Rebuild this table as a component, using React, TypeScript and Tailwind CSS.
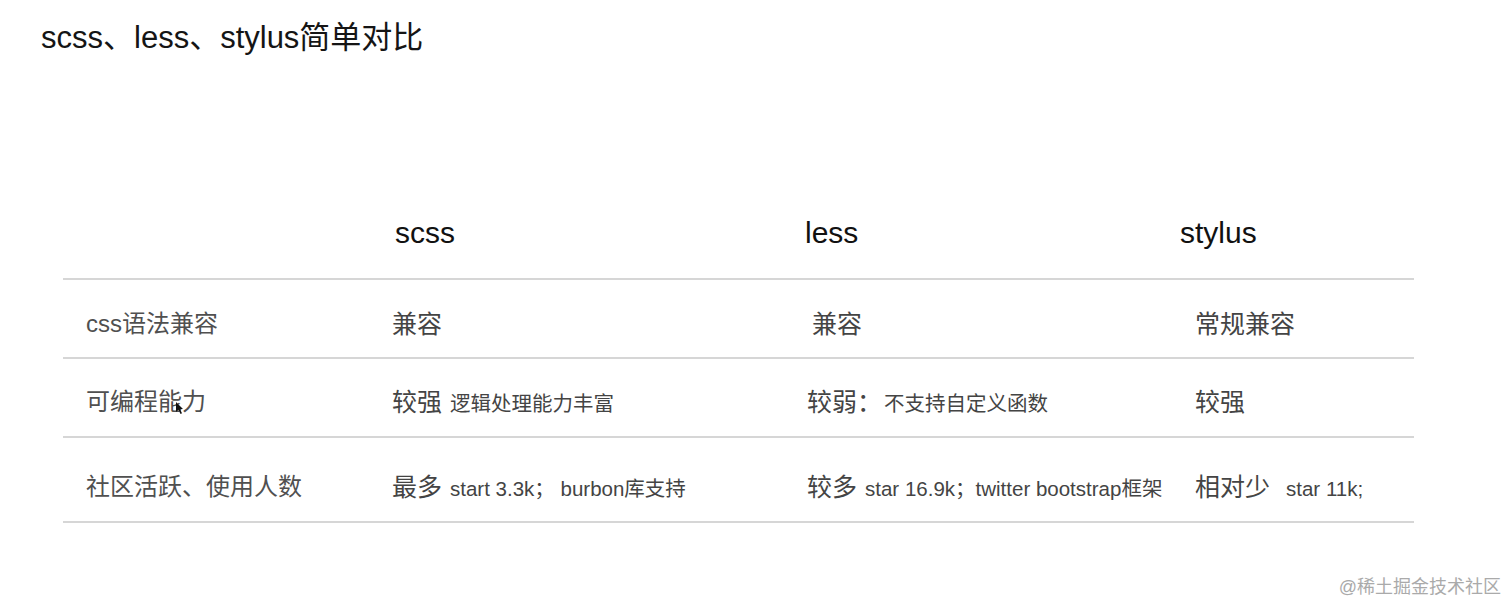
const FONT = {
  fontFamily: '"Liberation Sans", "Noto Sans CJK SC", sans-serif',
}

type Row = {
  label: string
  cells: { main: string; sub?: string; subGap?: string; pad?: string }[]
  pt: string
  h: string
}

const rows: Row[] = [
  {
    label: "css语法兼容",
    pt: "pt-[32px]",
    h: "h-[79px]",
    cells: [
      { main: "兼容" },
      { main: "兼容", pad: "pl-[5px]" },
      { main: "常规兼容" },
    ],
  },
  {
    label: "可编程能力",
    pt: "pt-[31px]",
    h: "h-[79px]",
    cells: [
      { main: "较强", sub: "逻辑处理能力丰富", subGap: "ml-2" },
      { main: "较弱：", sub: "不支持自定义函数", subGap: "ml-0.5" },
      { main: "较强" },
    ],
  },
  {
    label: "社区活跃、使用人数",
    pt: "pt-[37px]",
    h: "h-[85px]",
    cells: [
      { main: "最多", sub: "start 3.3k； burbon库支持", subGap: "ml-2" },
      {
        main: "较多",
        sub: "star 16.9k；twitter bootstrap框架",
        subGap: "ml-2",
      },
      { main: "相对少", sub: "star 11k;", subGap: "ml-4" },
    ],
  },
]

const Cursor = () => (
  <svg
    className="absolute left-[175px] top-[401px]"
    width="9"
    height="14"
    viewBox="0 0 9 14"
  >
    <path d="M1 1 L1 11 L3.5 8.8 L5.5 13 L7 12.3 L5 8.2 L8 8 Z" fill="#111" />
  </svg>
)

const App = () => {
  return (
    <section
      className="relative h-[616px] w-full overflow-hidden bg-white"
      style={FONT}
    >
      <h1 className="pl-[41px] pt-[22px] text-[31px] leading-[31px] font-normal text-[#151515]">
        scss、less、stylus简单对比
      </h1>

      <div className="ml-[63px] mt-[165px] w-[1351px]">
        <div className="grid h-[62px] grid-cols-[329px_415px_388px_1fr] border-b-2 border-[#d6d6d6] text-[30px] leading-[30px] text-[#111]">
          <div />
          <div className="pl-[3px]">scss</div>
          <div className="-ml-[2px]">less</div>
          <div className="-ml-[15px]">stylus</div>
        </div>

        {rows.map((row) => (
          <div
            key={row.label}
            className={`grid grid-cols-[329px_415px_388px_1fr] border-b-2 border-[#d6d6d6] ${row.h} ${row.pt}`}
          >
            <div className="pl-[23px] text-[24px] leading-[24px] text-[#505050]">
              {row.label}
            </div>
            {row.cells.map((cell, i) => (
              <div
                key={i}
                className={`whitespace-pre text-[25px] leading-[24px] text-[#444] ${cell.pad ?? ""}`}
              >
                {cell.main}
                {cell.sub && (
                  <span className={`text-[20.5px] ${cell.subGap}`}>
                    {cell.sub}
                  </span>
                )}
              </div>
            ))}
          </div>
        ))}
      </div>

      <Cursor />

      <div className="absolute right-[11px] top-[577px] text-[18px] leading-[20px] text-[#aaaaaa]">
        @稀土掘金技术社区
      </div>
    </section>
  )
}

export default App
